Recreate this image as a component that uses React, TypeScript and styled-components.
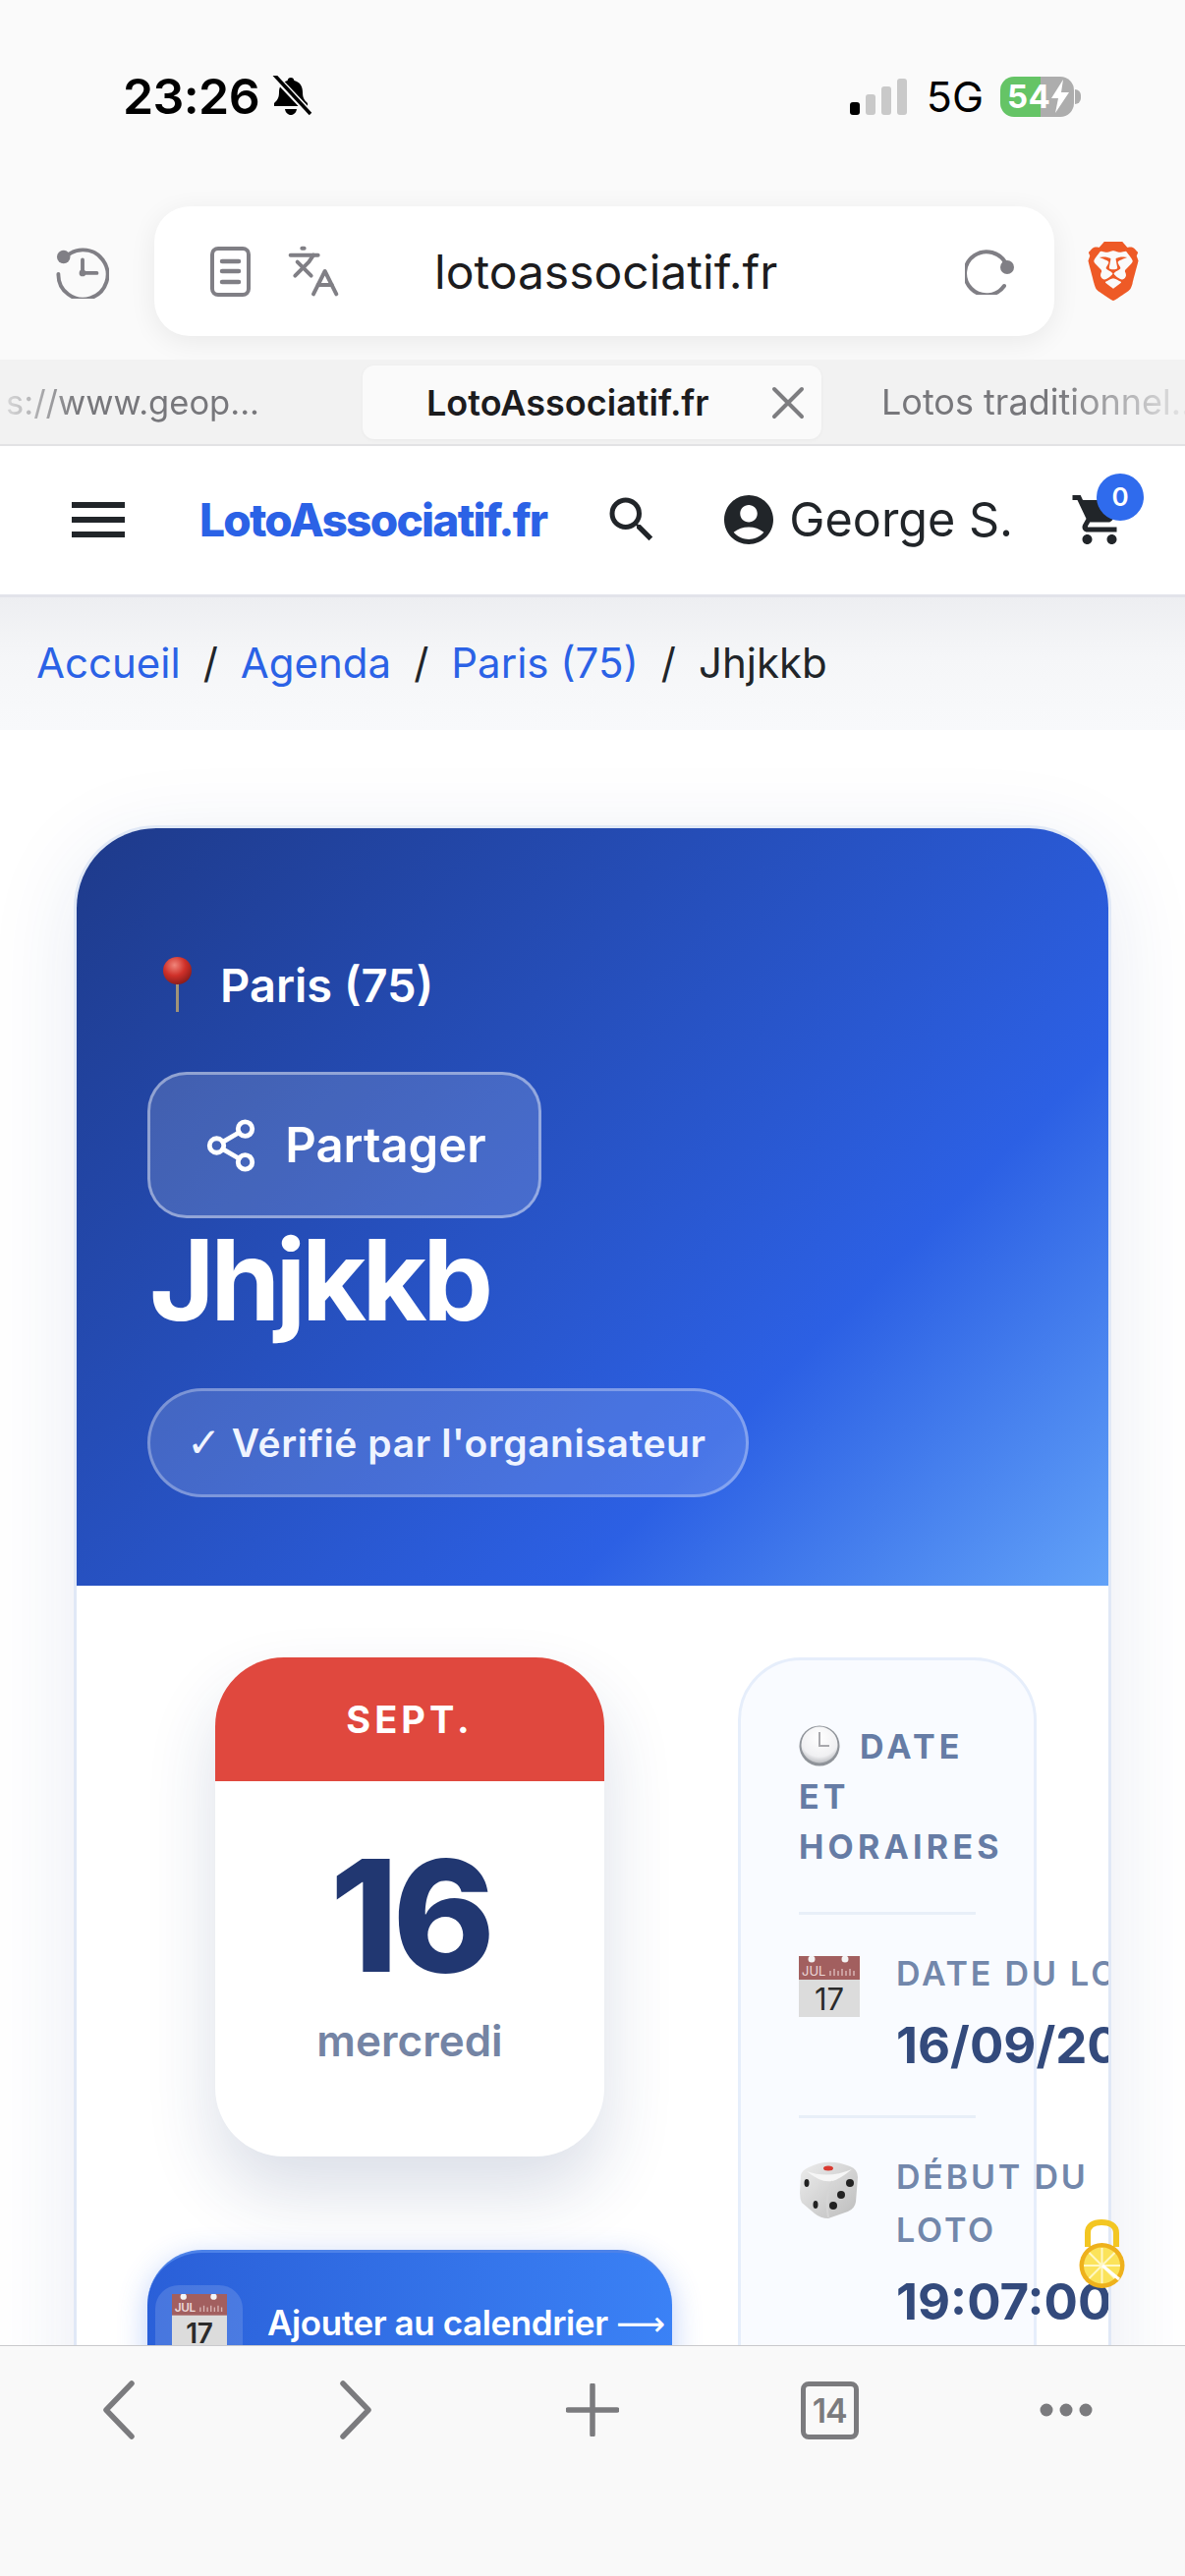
import React from "react"
import styled, { createGlobalStyle } from "styled-components"
import { Languages, Share2 } from "lucide-react"
import { MdAccountCircle, MdMenu, MdSearch, MdShoppingCart } from "react-icons/md"
import { SiBrave } from "react-icons/si"

const GlobalStyle = createGlobalStyle`
    html, body {
        margin: 0;
        padding: 0;
        background: #fff;
    }
    * {
        box-sizing: border-box;
    }
`

const Screen = styled.div`
    position: relative;
    width: 1206px;
    height: 2622px;
    overflow: hidden;
    display: flex;
    flex-direction: column;
    font-family: Inter, "Noto Sans", sans-serif;
    color: #212529;
    background: #fff;
`

/* ---- phone + browser chrome ---- */

const StatusBar = styled.div`
    height: 196px;
    flex: none;
    display: flex;
    align-items: center;
    justify-content: space-between;
    padding: 0 113px 0 125px;
    background: #fafafa;
    color: #000;
`

const StatusLeft = styled.div`
    display: flex;
    align-items: center;
    gap: 12px;
`

const Time = styled.span`
    font-size: 50px;
    font-weight: 600;
    letter-spacing: -0.6px;
`

const StatusRight = styled.div`
    display: flex;
    align-items: center;
`

const Signal = styled.div`
    display: flex;
    align-items: flex-end;
    gap: 6px;
    height: 37px;
    margin-right: 20px;
`

const SignalBar = styled.span<{ $h: number; $on?: boolean }>`
    width: 10px;
    height: ${p => p.$h}px;
    border-radius: 3px;
    background: ${p => (p.$on ? "#000" : "#c9c9c9")};
`

const NetworkLabel = styled.span`
    font-size: 43px;
    font-weight: 400;
    margin-right: 17px;
`

const Battery = styled.div`
    position: relative;
    width: 75px;
    height: 41px;
    border-radius: 14px;
    background: linear-gradient(90deg, #65c466 0 41px, #adadad 41px);
    display: flex;
    align-items: center;
    padding-left: 7px;
    color: #fff;
    font-size: 33px;
    font-weight: 700;
    letter-spacing: 0.5px;

    &::after {
        content: "";
        position: absolute;
        right: -7px;
        top: 13px;
        width: 6px;
        height: 15px;
        border-radius: 0 8px 8px 0;
        background: #adadad;
    }
`

const AddressRow = styled.div`
    height: 170px;
    flex: none;
    display: flex;
    align-items: flex-start;
    padding: 14px 0 0 57px;
    background: #fafafa;
`

const HistoryWrap = styled.div`
    width: 54px;
    height: 132px;
    margin-right: 46px;
    display: flex;
    align-items: center;
    color: #807f85;
`

const AddressBar = styled.div`
    width: 916px;
    height: 132px;
    flex: none;
    display: flex;
    align-items: center;
    padding: 0 41px 0 57px;
    border-radius: 36px;
    background: #fff;
    box-shadow: 0 6px 28px rgba(0, 0, 0, 0.07);
    color: #807f85;
`

const Url = styled.span`
    margin-left: 95px;
    font-size: 48px;
    color: #1c1c1e;
`

const ReloadWrap = styled.div`
    margin-left: auto;
    display: flex;
`

const BraveWrap = styled.div`
    height: 132px;
    margin-left: 30px;
    display: flex;
    align-items: center;
    color: #ee5a26;
`

const TabStrip = styled.div`
    height: 88px;
    flex: none;
    display: flex;
    background: #f2f2f2;
    border-bottom: 2px solid #e2e2e4;
    white-space: nowrap;
    font-size: 36px;
    color: #77777b;
`

const SideTab = styled.div<{ $side: "left" | "right" }>`
    display: flex;
    align-items: center;
    overflow: hidden;
    font-size: ${p => (p.$side === "left" ? "34.5px" : "36px")};
    width: ${p => (p.$side === "left" ? "369px" : "370px")};
    padding-left: ${p => (p.$side === "left" ? "6px" : "61px")};
    mask-image: ${p =>
        p.$side === "left"
            ? "linear-gradient(90deg, rgba(0,0,0,.15) 0, #000 80px)"
            : "linear-gradient(90deg, #000 240px, rgba(0,0,0,.1) 100%)"};
`

const ActiveTab = styled.div`
    width: 467px;
    height: 75px;
    margin-top: 6px;
    flex: none;
    display: flex;
    align-items: center;
    padding-left: 65px;
    border-radius: 12px;
    background: #fafafa;
    box-shadow: 0 1px 4px rgba(0, 0, 0, 0.04);
    font-weight: 600;
    color: #1c1c1e;
`

const TabClose = styled.div`
    margin-left: auto;
    margin-right: 17px;
    display: flex;
    color: #7d7d80;
`

/* ---- site header ---- */

const NavBar = styled.header`
    height: 154px;
    flex: none;
    display: flex;
    align-items: center;
    padding: 0 0 2px 73px;
    background: #fff;
    border-bottom: 3px solid #e2e3ea;
    color: #212529;
`

const NavItem = styled.div<{ $gap?: number }>`
    position: relative;
    display: flex;
    margin-left: ${p => p.$gap ?? 0}px;
`

const Logo = styled.div<{ $gap: number }>`
    margin-left: ${p => p.$gap}px;
    font-size: 46px;
    font-weight: 800;
    letter-spacing: -1.75px;
    color: #2b62e6;
`

const UserName = styled.span<{ $gap: number }>`
    margin-left: ${p => p.$gap}px;
    font-size: 48.5px;
    white-space: nowrap;
`

const CartBadge = styled.span`
    position: absolute;
    top: -17px;
    right: -15px;
    width: 48px;
    height: 48px;
    border-radius: 50%;
    display: flex;
    align-items: center;
    justify-content: center;
    background: #2f6bed;
    color: #fff;
    font-size: 26px;
    font-weight: 600;
`

const Breadcrumb = styled.nav`
    height: 135px;
    flex: none;
    display: flex;
    align-items: center;
    padding: 0 0 2px 37px;
    background: linear-gradient(180deg, #edeef1 0%, #f5f6f8 45%, #f8f9fb 100%);
    font-size: 42px;
    white-space: nowrap;
`

const Crumb = styled.span`
    color: #2b62e6;
`

const CrumbSeparator = styled.span`
    margin: 0 23px;
    color: #212529;
`

/* ---- event page ---- */

const Page = styled.main`
    flex: 1;
    min-height: 0;
    overflow: hidden;
    padding: 97px 75px 0;
    background: #fff;
`

const EventCard = styled.article`
    width: 1056px;
    border: 3px solid #e0e8f6;
    border-bottom: none;
    border-radius: 84px 84px 0 0;
    overflow: hidden;
    background: #fff;
    box-shadow: 0 20px 90px rgba(30, 58, 138, 0.1);
`

const Hero = styled.section`
    height: 771px;
    padding: 126px 72px 0;
    display: flex;
    flex-direction: column;
    align-items: flex-start;
    background: linear-gradient(135deg, #1e3a8a 0%, #2c60e4 70%, #62a2f8 100%);
    color: #fff;
`

const CityLine = styled.div`
    height: 66px;
    display: flex;
    align-items: center;
    gap: 26px;
    padding-left: 13px;
    font-size: 47px;
    font-weight: 600;
`

const ShareButton = styled.button`
    width: 401px;
    height: 149px;
    margin-top: 56px;
    display: flex;
    align-items: center;
    justify-content: center;
    gap: 26px;
    padding: 0;
    border: 3px solid rgba(255, 255, 255, 0.42);
    border-radius: 40px;
    background: rgba(255, 255, 255, 0.15);
    color: #fff;
    font-family: inherit;
    font-size: 49px;
    font-weight: 600;
`

const EventTitle = styled.h1`
    margin: 0;
    padding-left: 2px;
    font-size: 114px;
    line-height: 126px;
    font-weight: 700;
    letter-spacing: -4.5px;
`

const VerifiedBadge = styled.div`
    height: 111px;
    margin-top: 47px;
    display: flex;
    align-items: center;
    padding: 0 40px 0 37px;
    border: 3px solid rgba(255, 255, 255, 0.3);
    border-radius: 56px;
    background: rgba(255, 255, 255, 0.14);
    color: #eff4ff;
    font-size: 39px;
    font-weight: 600;
    letter-spacing: 0.6px;
    white-space: nowrap;
`

const CheckMark = styled.span`
    margin-right: 10px;
    font-family: "DejaVu Sans", sans-serif;
    font-size: 42px;
    font-weight: 400;
`

const EventBody = styled.section`
    display: grid;
    grid-template-columns: 534px 304px;
    gap: 67px;
    padding: 73px 0 0 72px;
`

const LeftColumn = styled.div`
    display: flex;
    flex-direction: column;
    align-items: center;
    gap: 95px;
`

const CalendarCard = styled.div`
    width: 396px;
    height: 508px;
    border-radius: 70px;
    overflow: hidden;
    background: #fff;
    text-align: center;
    box-shadow: 0 36px 70px rgba(30, 58, 112, 0.16);
`

const CalendarMonth = styled.div`
    height: 126px;
    display: flex;
    align-items: center;
    justify-content: center;
    background: #e0483e;
    color: #fff;
    font-size: 38px;
    font-weight: 700;
    letter-spacing: 4px;
`

const CalendarDay = styled.div`
    margin-top: 52px;
    font-size: 158px;
    line-height: 170px;
    font-weight: 800;
    letter-spacing: -6px;
    color: #213771;
`

const CalendarWeekday = styled.div`
    margin-top: 15px;
    font-size: 44px;
    font-weight: 600;
    color: #7484a4;
`

const AddButton = styled.div`
    width: 534px;
    height: 130px;
    align-self: flex-start;
    display: flex;
    align-items: flex-start;
    gap: 25px;
    padding: 33px 0 0 8px;
    border-radius: 56px 56px 0 0;
    border-top: 3px solid #4d82e8;
    background: linear-gradient(100deg, #2a5fd8 0%, #3b82f6 100%);
    color: #fff;
    font-size: 35px;
    font-weight: 600;
    letter-spacing: -0.4px;
    white-space: nowrap;
    box-shadow: 0 8px 30px rgba(37, 99, 235, 0.3);
`

const AddIcon = styled.div`
    width: 89px;
    height: 89px;
    flex: none;
    display: flex;
    justify-content: center;
    padding-top: 9px;
    border-radius: 24px;
    background: rgba(255, 255, 255, 0.14);
`

const AddLabel = styled.span`
    margin-top: 17px;
`

const LongArrow = styled.span`
    font-family: "DejaVu Sans", sans-serif;
    font-weight: 400;
`

const InfoPanel = styled.aside`
    width: 304px;
    height: 900px;
    padding: 62px 59px 0;
    border: 3px solid #e6eefb;
    border-radius: 64px;
    background: #f9fbff;
`

const PanelTitle = styled.div`
    padding-bottom: 41px;
    border-bottom: 3px solid #e8eff8;
    font-size: 34px;
    line-height: 51px;
    font-weight: 700;
    letter-spacing: 4.2px;
    color: #667ca5;

    svg {
        vertical-align: -8px;
        margin-right: 20px;
    }
`

const InfoRow = styled.div`
    display: flex;
    gap: 37px;
    padding: 33px 0 40px;
    white-space: nowrap;

    & + & {
        border-top: 3px solid #e8eff8;
    }
`

const InfoRows = styled.div`
    width: 180px;
`

const InfoIcon = styled.div`
    width: 62px;
    flex: none;
    padding-top: 9px;
`

const InfoLabel = styled.div`
    font-size: 34px;
    line-height: 54px;
    font-weight: 600;
    letter-spacing: 2.8px;
    color: #7287ab;
`

const InfoValue = styled.div`
    margin-top: 15px;
    font-size: 51px;
    line-height: 62px;
    font-weight: 700;
    color: #334a7c;
`

const FloatingLock = styled.div`
    position: absolute;
    left: 1098px;
    top: 2259px;
    width: 47px;
    height: 71px;
`

/* ---- browser bottom bar ---- */

const BottomBar = styled.footer`
    height: 235px;
    flex: none;
    display: grid;
    grid-template-columns: repeat(5, 1fr);
    align-items: start;
    padding-top: 35px;
    border-top: 1px solid #c9c9cc;
    background: #f9f9f9;
    color: #7b7b7e;
`

const BottomItem = styled.div`
    height: 60px;
    display: flex;
    align-items: center;
    justify-content: center;
`

const TabCount = styled.div`
    width: 59px;
    height: 59px;
    display: flex;
    align-items: center;
    justify-content: center;
    border: 5px solid #7b7b7e;
    border-radius: 8px;
    font-size: 34px;
    font-weight: 600;
    letter-spacing: -1px;
`

/* ---- drawings ---- */

const BellOffIcon = () => (
    <svg width="42" height="42" viewBox="0 0 42 42">
        <path d="M20 2c2 0 3 1 3.400 3 6 1.500 8.600 6 8.600 12 0 5 1.500 8 5 11v3H3v-3c3.500-3 5-6 5-11 0-6 3-10.500 8.600-12C17 3 18 2 20 2z" fill="#000" />
        <path d="M14 34h12c-.5 3.500-3 6-6 6s-5.500-2.500-6-6z" fill="#000" />
        <path d="M4 1l36 38" stroke="#fafafa" strokeWidth="7" />
        <path d="M3 -1l37 40" stroke="#000" strokeWidth="3.500" />
    </svg>
)

const BoltIcon = () => (
    <svg width="20" height="34" viewBox="0 0 20 34">
        <path d="M13 0L1 19h7l-3 15L19 13h-8z" fill="#fff" />
    </svg>
)

const HistoryIcon = () => (
    <svg width="56" height="56" viewBox="0 0 56 56" fill="none" stroke="currentColor" strokeLinecap="round">
        <path d="M7 17A26 26 0 1 1 2.500 31" strokeWidth="4" />
        <circle cx="8" cy="13" r="7" fill="currentColor" stroke="none" />
        <path d="M28 16v14h15" strokeWidth="4" />
        <circle cx="28" cy="30" r="3.500" fill="currentColor" stroke="none" />
    </svg>
)

const ReaderIcon = () => (
    <svg width="41" height="51" viewBox="0 0 41 51" fill="none" stroke="currentColor" strokeLinecap="round">
        <rect x="2" y="2" width="37" height="47" rx="6" strokeWidth="4" />
        <path d="M12 15h17M12 25h17M12 36h17" strokeWidth="4.500" />
    </svg>
)

const ReloadIcon = () => (
    <svg width="50" height="48" viewBox="0 0 50 48" fill="none">
        <path d="M42 17A22 22 0 1 0 40 39" stroke="#807f85" strokeWidth="4" strokeLinecap="round" />
        <circle cx="43" cy="20" r="7" fill="#807f85" />
    </svg>
)

const CloseIcon = () => (
    <svg width="34" height="34" viewBox="0 0 34 34" stroke="currentColor" strokeWidth="4" strokeLinecap="round">
        <path d="M3 3l28 28M31 3L3 31" />
    </svg>
)

const PinEmoji = () => (
    <svg width="35" height="56" viewBox="0 0 35 56">
        <defs>
            <radialGradient id="pinHead" cx="40%" cy="30%" r="70%">
                <stop offset="0%" stopColor="#f0857a" />
                <stop offset="55%" stopColor="#cf3029" />
                <stop offset="100%" stopColor="#8d1d1b" />
            </radialGradient>
        </defs>
        <rect x="16" y="24" width="3" height="32" fill="#a19378" />
        <ellipse cx="17.500" cy="14" rx="14.500" ry="14" fill="url(#pinHead)" />
    </svg>
)

const ClockEmoji = () => (
    <svg width="42" height="42" viewBox="0 0 42 42">
        <defs>
            <radialGradient id="clockFace" cx="50%" cy="30%" r="75%">
                <stop offset="0%" stopColor="#ffffff" />
                <stop offset="70%" stopColor="#f0f0f2" />
                <stop offset="100%" stopColor="#aeb0b5" />
            </radialGradient>
        </defs>
        <circle cx="21" cy="21" r="20.500" fill="#8f9399" />
        <circle cx="21" cy="20" r="18.500" fill="url(#clockFace)" />
        <path d="M21 7v14h10" fill="none" stroke="#a8a8ac" strokeWidth="2" />
    </svg>
)

const CalendarEmoji: React.FC<{ size: number }> = ({ size }) => (
    <svg width={size} height={size} viewBox="0 0 62 62">
        <rect x="0" y="0" width="62" height="62" fill="#dcdcdc" />
        <rect x="0" y="0" width="62" height="24" fill="#a25f5f" />
        <circle cx="13" cy="3" r="3.500" fill="#f4f4f4" />
        <circle cx="47" cy="3" r="3.500" fill="#f4f4f4" />
        <path d="M32 20v-5M36 20v-7M40 20v-5M44 20v-7M48 20v-5M52 20v-7M56 20v-5" stroke="#d8b4b4" strokeWidth="1.500" />
        <text x="3" y="20" fontFamily="Inter, sans-serif" fontSize="13" fill="#ecd9d9">JUL</text>
        <text x="31" y="55" textAnchor="middle" fontFamily="Inter, sans-serif" fontSize="31" fill="#2b2b2b">17</text>
    </svg>
)

const DiceEmoji = () => (
    <svg width="61" height="60" viewBox="0 0 61 60">
        <defs>
            <linearGradient id="diceFront" x1="0" y1="0" x2="1" y2="1">
                <stop offset="0%" stopColor="#ededed" />
                <stop offset="100%" stopColor="#bcbcbc" />
            </linearGradient>
        </defs>
        <path d="M10 8Q30 -2 52 7Q60 10 60 18L58 43Q57 50 50 53L30 60Q22 60 16 55L3 44Q1 40 1 34L2 16Q3 11 10 8z" fill="url(#diceFront)" />
        <path d="M8 12Q30 20 54 10Q42 20 34 22Q22 24 8 12z" fill="#f6f6f6" />
        <path d="M34 22Q26 36 30 59" stroke="#d5d5d5" strokeWidth="2" fill="none" />
        <ellipse cx="30" cy="9" rx="5" ry="2.500" fill="#d93a31" />
        <ellipse cx="8" cy="24" rx="2.500" ry="4" fill="#222" />
        <ellipse cx="17" cy="46" rx="2.500" ry="4" fill="#222" />
        <ellipse cx="52" cy="24" rx="4" ry="4" fill="#222" />
        <ellipse cx="43" cy="36" rx="4" ry="4" fill="#222" />
        <ellipse cx="35" cy="47" rx="4" ry="4" fill="#222" />
    </svg>
)

const LockEmoji = () => (
    <svg width="47" height="71" viewBox="0 0 47 71">
        <path d="M9 28V14C9 6 15 3 23 3s15 3 15 11v14" fill="none" stroke="#f3c622" strokeWidth="6" />
        <circle cx="23.500" cy="47" r="23" fill="#eeb11c" />
        <circle cx="23.500" cy="47" r="18.500" fill="#fbe35a" />
        <path d="M23.500 29v36M5 47h37M10.500 34l26 26M36.500 34l-26 26" stroke="#fff8c4" strokeWidth="2" />
        <path d="M24 47l17 14" stroke="#fff" strokeWidth="3" />
    </svg>
)

const BackIcon = () => (
    <svg width="36" height="60" viewBox="0 0 36 60" fill="none" stroke="currentColor" strokeWidth="5.500" strokeLinecap="round" strokeLinejoin="round">
        <path d="M31 3L5 30l26 27" />
    </svg>
)

const ForwardIcon = () => (
    <svg width="36" height="60" viewBox="0 0 36 60" fill="none" stroke="currentColor" strokeWidth="5.500" strokeLinecap="round" strokeLinejoin="round">
        <path d="M5 3l26 27L5 57" />
    </svg>
)

const PlusIcon = () => (
    <svg width="54" height="54" viewBox="0 0 54 54" stroke="currentColor" strokeWidth="5.500" strokeLinecap="round">
        <path d="M27 2v50M2 27h50" />
    </svg>
)

const MoreIcon = () => (
    <svg width="54" height="14" viewBox="0 0 54 14" fill="currentColor">
        <circle cx="7" cy="7" r="6.500" />
        <circle cx="27" cy="7" r="6.500" />
        <circle cx="47" cy="7" r="6.500" />
    </svg>
)

const crumbs = ["Accueil", "Agenda", "Paris (75)"]

const App: React.FC = () => {
    return <Screen>
        <GlobalStyle />

        <StatusBar>
            <StatusLeft>
                <Time>23:26</Time>
                <BellOffIcon />
            </StatusLeft>
            <StatusRight>
                <Signal>
                    <SignalBar $h={13} $on />
                    <SignalBar $h={21} />
                    <SignalBar $h={29} />
                    <SignalBar $h={37} />
                </Signal>
                <NetworkLabel>5G</NetworkLabel>
                <Battery>54<BoltIcon /></Battery>
            </StatusRight>
        </StatusBar>

        <AddressRow>
            <HistoryWrap><HistoryIcon /></HistoryWrap>
            <AddressBar>
                <ReaderIcon />
                <Languages size={56} strokeWidth={1.7} style={{ marginLeft: 36 }} />
                <Url>lotoassociatif.fr</Url>
                <ReloadWrap><ReloadIcon /></ReloadWrap>
            </AddressBar>
            <BraveWrap><SiBrave size={60} /></BraveWrap>
        </AddressRow>

        <TabStrip>
            <SideTab $side="left">s://www.geop...</SideTab>
            <ActiveTab>
                LotoAssociatif.fr
                <TabClose><CloseIcon /></TabClose>
            </ActiveTab>
            <SideTab $side="right">Lotos traditionnel...</SideTab>
        </TabStrip>

        <NavBar>
            <NavItem><MdMenu size={72} style={{ margin: "0 -9px" }} /></NavItem>
            <Logo $gap={76}>LotoAssociatif.fr</Logo>
            <NavItem $gap={57}><MdSearch size={60} /></NavItem>
            <NavItem $gap={59}><MdAccountCircle size={60} /></NavItem>
            <UserName $gap={11}>George S.</UserName>
            <NavItem $gap={58}>
                <MdShoppingCart size={60} />
                <CartBadge>0</CartBadge>
            </NavItem>
        </NavBar>

        <Breadcrumb>
            {crumbs.map(crumb => (
                <React.Fragment key={crumb}>
                    <Crumb>{crumb}</Crumb>
                    <CrumbSeparator>/</CrumbSeparator>
                </React.Fragment>
            ))}
            Jhjkkb
        </Breadcrumb>

        <Page>
            <EventCard>
                <Hero>
                    <CityLine><PinEmoji />Paris (75)</CityLine>
                    <ShareButton><Share2 size={58} strokeWidth={2} />Partager</ShareButton>
                    <EventTitle>Jhjkkb</EventTitle>
                    <VerifiedBadge><CheckMark>✓</CheckMark>Vérifié par l'organisateur</VerifiedBadge>
                </Hero>
                <EventBody>
                    <LeftColumn>
                        <CalendarCard>
                            <CalendarMonth>SEPT.</CalendarMonth>
                            <CalendarDay>16</CalendarDay>
                            <CalendarWeekday>mercredi</CalendarWeekday>
                        </CalendarCard>
                        <AddButton>
                            <AddIcon><CalendarEmoji size={56} /></AddIcon>
                            <AddLabel>Ajouter au calendrier <LongArrow>⟶</LongArrow></AddLabel>
                        </AddButton>
                    </LeftColumn>
                    <InfoPanel>
                        <PanelTitle><ClockEmoji />DATE ET HORAIRES</PanelTitle>
                        <InfoRows>
                            <InfoRow>
                                <InfoIcon><CalendarEmoji size={62} /></InfoIcon>
                                <div>
                                    <InfoLabel>DATE DU LOTO</InfoLabel>
                                    <InfoValue>16/09/2026</InfoValue>
                                </div>
                            </InfoRow>
                            <InfoRow>
                                <InfoIcon><DiceEmoji /></InfoIcon>
                                <div>
                                    <InfoLabel>DÉBUT DU<br />LOTO</InfoLabel>
                                    <InfoValue>19:07:00</InfoValue>
                                </div>
                            </InfoRow>
                        </InfoRows>
                    </InfoPanel>
                </EventBody>
            </EventCard>
        </Page>

        <BottomBar>
            <BottomItem><BackIcon /></BottomItem>
            <BottomItem><ForwardIcon /></BottomItem>
            <BottomItem><PlusIcon /></BottomItem>
            <BottomItem><TabCount>14</TabCount></BottomItem>
            <BottomItem><MoreIcon /></BottomItem>
        </BottomBar>

        <FloatingLock><LockEmoji /></FloatingLock>
    </Screen>
}

export default App
